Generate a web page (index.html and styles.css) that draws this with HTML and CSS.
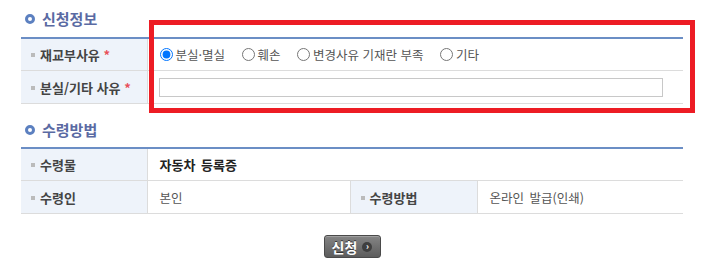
FILE: index.html
```html
<!DOCTYPE html>
<html lang="ko">
<head>
<meta charset="utf-8">
<link rel="stylesheet" href="styles.css">
</head>
<body>
<div class="wrap">
  <h3 class="title first"><span class="ring"></span>신청정보</h3>
  <table class="grid">
    <tr class="r1">
      <th><span class="dot"></span>재교부사유 <em>*</em></th>
      <td>
        <label class="opt"><input type="radio" name="r" checked>분실·멸실</label>
        <label class="opt"><input type="radio" name="r">훼손</label>
        <label class="opt"><input type="radio" name="r">변경사유 기재란 부족</label>
        <label class="opt"><input type="radio" name="r">기타</label>
      </td>
    </tr>
    <tr class="r2">
      <th><span class="dot"></span>분실/기타 사유 <em>*</em></th>
      <td><input type="text" class="txt"></td>
    </tr>
  </table>

  <h3 class="title second"><span class="ring"></span>수령방법</h3>
  <table class="grid four">
    <colgroup><col class="c1"><col class="c2"><col class="c3"><col class="c4"></colgroup>
    <tr class="r1">
      <th><span class="dot"></span>수령물</th>
      <td colspan="3" class="strong">자동차 등록증</td>
    </tr>
    <tr class="r2">
      <th><span class="dot"></span>수령인</th>
      <td>본인</td>
      <th><span class="dot"></span>수령방법</th>
      <td>온라인 발급(인쇄)</td>
    </tr>
  </table>

  <div class="actions">
    <button class="btn">신청<span class="arr">›</span></button>
  </div>

  <div class="highlight"></div>
</div>
</body>
</html>
```

FILE: styles.css
```css
html, body {
  margin: 0;
  padding: 0;
  background: #fff;
}
body {
  font-family: "Noto Sans CJK KR", "Noto Sans", sans-serif;
  font-size: 12.5px;
  color: #555;
}
.wrap {
  position: relative;
  width: 662px;
  margin-left: 21px;
}
.title {
  margin: 0;
  font-size: 15px;
  font-weight: bold;
  color: #5a6aa3;
  display: flex;
  align-items: center;
  gap: 7px;
  padding-left: 4px;
}
.title.first {
  height: 37px;
}
.title.second {
  margin-top: 8px;
  height: 35px;
}
.ring {
  width: 4px;
  height: 4px;
  border: 3px solid #5c80c0;
  border-radius: 50%;
  display: inline-block;
}
.grid {
  width: 662px;
  border-collapse: collapse;
  border-top: 2px solid #6b8ec5;
  table-layout: fixed;
}
.grid th, .grid td {
  border-bottom: 1px solid #dcdcdc;
  padding: 0;
  text-align: left;
  vertical-align: middle;
}
.grid th {
  width: 126px;
  background: #eef3fa;
  border-right: 1px solid #dcdcdc;
  font-size: 13px;
  font-weight: bold;
  color: #444;
  padding-left: 10px;
  box-sizing: border-box;
  white-space: nowrap;
}
.grid td {
  padding-left: 12px;
}
.four td {
  word-spacing: 2px;
}
.grid .r1 th, .grid .r1 td { height: 31px; }
.grid .r2 th, .grid .r2 td { height: 32px; }
.four .c1 { width: 126px; }
.four .c2 { width: 203px; }
.four .c3 { width: 127px; }
.four .c4 { width: auto; }
.four td + th { border-left: 1px solid #dcdcdc; }
.dot {
  display: inline-block;
  width: 4px;
  height: 4px;
  background: #bbb;
  margin-right: 5px;
  vertical-align: middle;
  position: relative;
  top: -1px;
}
em {
  font-style: normal;
  color: #e8505a;
}
.opt {
  display: inline-flex;
  align-items: center;
  margin-right: 13px;
  color: #555;
}
.opt input {
  margin: 0 3px 0 0;
  width: 13px;
  height: 13px;
}
.txt {
  width: 504px;
  height: 19px;
  box-sizing: border-box;
  border: 1px solid #c8c8c8;
  margin: 0 0 0 -1px;
  padding: 0 4px;
  display: block;
}
.strong {
  font-size: 13px;
  font-weight: bold;
  color: #222;
}
.actions {
  display: flex;
  justify-content: center;
  margin-top: 21px;
}
.btn {
  width: 57px;
  height: 23px;
  border: 1px solid #4a4a4a;
  border-radius: 3px;
  background: linear-gradient(#858585, #5c5c5c);
  color: #fff;
  font-family: "Noto Sans CJK KR", sans-serif;
  font-size: 14px;
  font-weight: bold;
  text-shadow: 0 -1px 0 #333;
  display: flex;
  align-items: center;
  justify-content: center;
  gap: 5px;
  padding: 0;
  box-shadow: inset 0 1px 0 #a0a0a0;
}
.arr {
  width: 10px;
  height: 10px;
  border-radius: 50%;
  background: #3f3f3f;
  font-size: 9px;
  line-height: 10px;
  text-align: center;
  text-shadow: none;
}
.highlight {
  position: absolute;
  left: 128px;
  top: 20px;
  width: 536px;
  height: 83px;
  border: 5px solid #ed1c24;
}
```
